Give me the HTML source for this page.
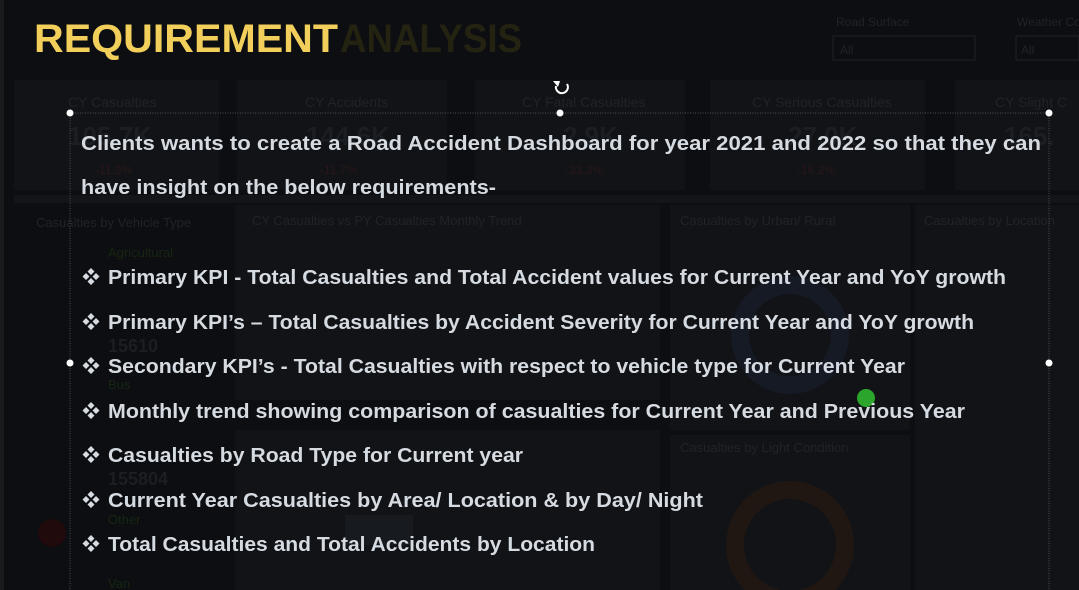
<!DOCTYPE html>
<html><head><meta charset="utf-8"><style>
html,body{margin:0;padding:0;background:#0c0d10;}
svg{display:block}
</style></head><body>
<svg width="1079" height="590" viewBox="0 0 1079 590" xmlns="http://www.w3.org/2000/svg" font-family="Liberation Sans, sans-serif">
<rect width="1079" height="590" fill="#0c0e11"/>
<rect x="0" y="0" width="4" height="590" fill="#1a1b1d"/>
<g fill="#111317">
<rect x="14" y="80" width="205" height="110"/>
<rect x="237" y="80" width="210" height="110"/>
<rect x="475" y="80" width="210" height="110"/>
<rect x="710" y="80" width="215" height="110"/>
<rect x="955" y="80" width="124" height="110"/>
<rect x="235" y="205" width="425" height="195"/>
<rect x="670" y="205" width="240" height="225"/>
<rect x="915" y="205" width="164" height="385"/>
<rect x="670" y="435" width="240" height="155"/>
<rect x="235" y="430" width="425" height="160"/>
</g>
<rect x="14" y="195" width="1065" height="8" fill="#131518"/>
<g font-size="14" fill="#202328">
<text x="68" y="107">CY Casualties</text>
<text x="305" y="107">CY Accidents</text>
<text x="522" y="107">CY Fatal Casualties</text>
<text x="752" y="107">CY Serious Casualties</text>
<text x="995" y="107">CY Slight C</text>
<text x="36" y="227" font-size="13">Casualties by Vehicle Type</text>
<text x="252" y="225" font-size="13">CY Casualties vs PY Casualties Monthly Trend</text>
<text x="680" y="225" font-size="13">Casualties by Urban/ Rural</text>
<text x="924" y="225" font-size="13">Casualties by Location</text>
<text x="680" y="452" font-size="13">Casualties by Light Condition</text>
<text x="836" y="26" font-size="12">Road Surface</text>
<text x="1017" y="26" font-size="12">Weather Co</text>
</g>
<g font-size="26" font-weight="bold" fill="#1b1e22">
<text x="68" y="145">105.7K</text><text x="306" y="145">144.6K</text><text x="563" y="145">2.9K</text><text x="788" y="145">27.0K</text><text x="1004" y="145">165.</text>
<text x="108" y="352" font-size="18">15610</text><text x="108" y="485" font-size="18">155804</text>
</g>
<g font-size="12" fill="#2a1718"><text x="95" y="174">-11.9%</text><text x="320" y="174">-11.7%</text><text x="565" y="174">-33.3%</text><text x="797" y="174">-16.2%</text></g>
<g font-size="13" fill="#172612"><text x="108" y="257">Agricultural</text><text x="108" y="389">Bus</text><text x="108" y="524">Other</text><text x="108" y="588">Van</text></g>
<rect x="833" y="36" width="142" height="24" fill="none" stroke="#202328"/>
<rect x="1016" y="36" width="63" height="24" fill="none" stroke="#202328"/>
<text x="840" y="54" font-size="12" fill="#202328">All</text><text x="1021" y="54" font-size="12" fill="#202328">All</text>
<circle cx="790" cy="335" r="50" fill="none" stroke="#151a24" stroke-width="18"/>
<circle cx="790" cy="545" r="55" fill="none" stroke="#201712" stroke-width="18"/>
<circle cx="52" cy="533" r="14" fill="#200a0c"/>
<rect x="345" y="515" width="68" height="30" fill="#171a1e"/>
<text x="340" y="52" font-size="40" font-weight="bold" fill="#242312" textLength="182" lengthAdjust="spacingAndGlyphs">ANALYSIS</text>
<text x="34" y="52" font-size="40" font-weight="bold" fill="#f2cf5b" textLength="304" lengthAdjust="spacingAndGlyphs">REQUIREMENT</text>
<g stroke="#4a4d52" stroke-width="1" stroke-dasharray="1 1.5" fill="none">
<line x1="70" y1="113" x2="1049" y2="113"/>
<line x1="70" y1="113" x2="70" y2="590"/>
<line x1="1049" y1="113" x2="1049" y2="590"/>
</g>
<g fill="#fff">
<circle cx="70" cy="113" r="3.5"/><circle cx="560" cy="113" r="3.5"/><circle cx="1049" cy="113" r="3.5"/>
<circle cx="70" cy="363" r="3.5"/><circle cx="1049" cy="363" r="3.5"/>
</g>
<path d="M567 84 A6 6 0 1 1 556 86" fill="none" stroke="#fff" stroke-width="2"/>
<path d="M553 81 L558 87 L560 81 Z" fill="#fff"/>
<circle cx="866" cy="398" r="9" fill="#2ba52b"/>
<g font-size="20" font-weight="bold" fill="#d6dbe2">
<text x="81" y="150" textLength="960" lengthAdjust="spacingAndGlyphs">Clients wants to create a Road Accident Dashboard for year 2021 and 2022 so that they can</text>
<text x="81" y="194" textLength="415" lengthAdjust="spacingAndGlyphs">have insight on the below requirements-</text>
<text x="108" y="284" textLength="898" lengthAdjust="spacingAndGlyphs">Primary KPI - Total Casualties and Total Accident values for Current Year and YoY growth</text>
<text x="108" y="329" textLength="866" lengthAdjust="spacingAndGlyphs">Primary KPI’s – Total Casualties by Accident Severity for Current Year and YoY growth</text>
<text x="108" y="373" textLength="797" lengthAdjust="spacingAndGlyphs">Secondary KPI’s - Total Casualties with respect to vehicle type for Current Year</text>
<text x="108" y="418" textLength="857" lengthAdjust="spacingAndGlyphs">Monthly trend showing comparison of casualties for Current Year and Previous Year</text>
<text x="108" y="462" textLength="415" lengthAdjust="spacingAndGlyphs">Casualties by Road Type for Current year</text>
<text x="108" y="507" textLength="595" lengthAdjust="spacingAndGlyphs">Current Year Casualties by Area/ Location &amp; by Day/ Night</text>
<text x="108" y="551" textLength="487" lengthAdjust="spacingAndGlyphs">Total Casualties and Total Accidents by Location</text>
</g>
<g fill="#d6dbe2">
<g id="b"><path d="M91 268 l3.5 3.5 -3.5 3.5 -3.5 -3.5z M91 278 l3.5 3.5 -3.5 3.5 -3.5 -3.5z M86 273 l3.5 3.5 -3.5 3.5 -3.5 -3.5z M96 273 l3.5 3.5 -3.5 3.5 -3.5 -3.5z"/></g>
<use href="#b" y="45"/><use href="#b" y="89"/><use href="#b" y="134"/><use href="#b" y="178"/><use href="#b" y="223"/><use href="#b" y="267"/>
</g>
</svg>
</body></html>
